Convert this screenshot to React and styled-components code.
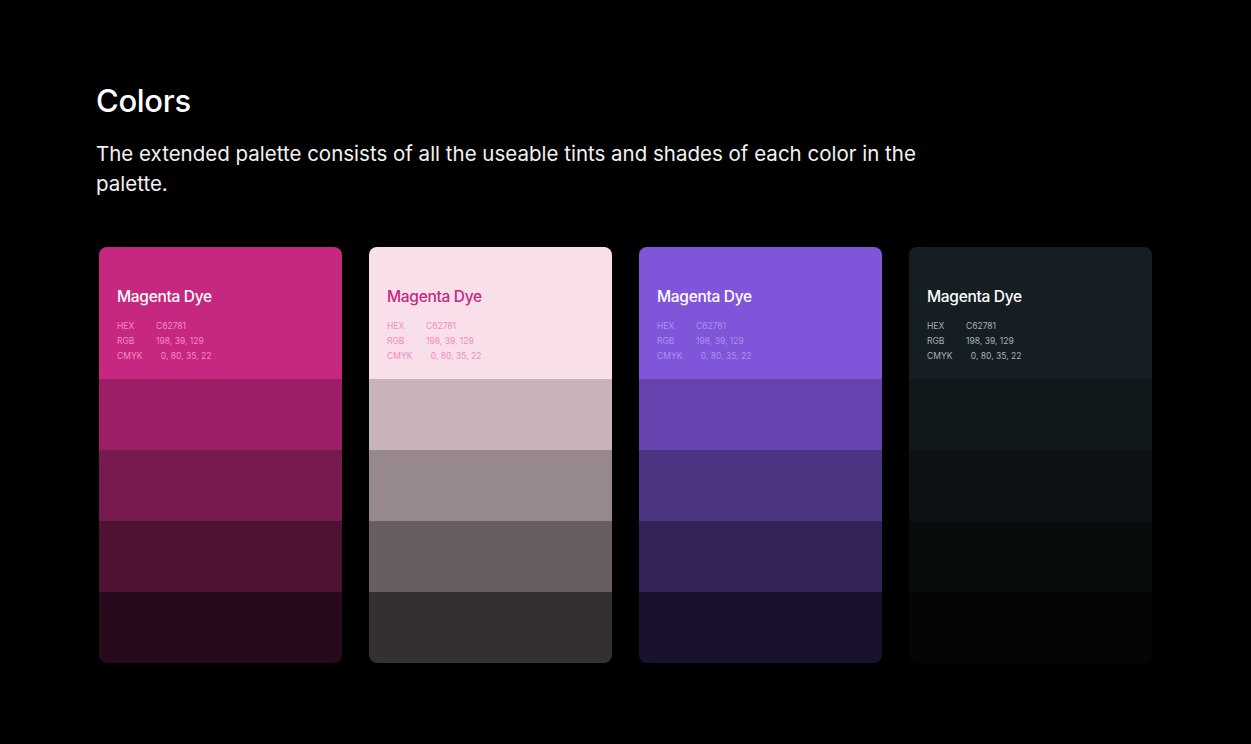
import React from 'react';
import styled, { createGlobalStyle } from 'styled-components';

const Global = createGlobalStyle`
  html, body { margin: 0; background: #000; }
  body { font-family: Inter, "Open Sans", sans-serif; }
`;

const Page = styled.div`
  width: 1251px;
  height: 744px;
  background: #000;
  padding: 82px 0 0 96px;
  box-sizing: border-box;
`;

const Title = styled.h1`
  margin: 0;
  color: #fff;
  font-size: 31px;
  font-weight: 500;
  letter-spacing: -0.3px;
`;

const Lead = styled.p`
  margin: 20px 0 0;
  width: 820px;
  color: #f2f2f2;
  font-size: 20.5px;
  line-height: 30px;
  font-weight: 400;
`;

const Cards = styled.div`
  display: flex;
  gap: 27px;
  margin: 48px 0 0 3px;
`;

const Card = styled.div`
  width: 243px;
  border-radius: 8px;
  overflow: hidden;
  display: flex;
  flex-direction: column;
`;

const Head = styled.div`
  height: 132px;
  background: ${p => p.$bg};
  padding: 40px 18px 0;
  box-sizing: border-box;
`;

const Name = styled.div`
  color: ${p => p.$fg};
  font-size: 15.5px;
  font-weight: 500;
  letter-spacing: -0.3px;
  margin-bottom: 13px;
`;

const Row = styled.div`
  display: flex;
  font-size: 8.5px;
  line-height: 15px;
  color: ${p => p.$fg};
`;

const Key = styled.span`
  width: 39px;
`;

const Shade = styled.div`
  height: 71px;
  background: ${p => p.$bg};
`;

const palettes = [
  { bg: '#c62781', name: '#fff', meta: 'rgba(255,160,210,0.85)', shades: ['#9c1f66', '#771a4f', '#4d1234', '#270a1b'] },
  { bg: '#f9dfea', name: '#c62781', meta: '#f08cbf', shades: ['#c8b3bd', '#978890', '#675d62', '#343032'] },
  { bg: '#7f56d9', name: '#fff', meta: 'rgba(180,150,245,0.9)', shades: ['#6643ae', '#4c3483', '#332357', '#1a122c'] },
  { bg: '#151f23', name: '#fff', meta: '#a9b0b3', shades: ['#10181b', '#0c1214', '#080c0d', '#040606'] },
];

const App = () => (
  <Page>
    <Global />
    <Title>Colors</Title>
    <Lead>The extended palette consists of all the useable tints and shades of each color in the palette.</Lead>
    <Cards>
      {palettes.map((p, i) => (
        <Card key={i}>
          <Head $bg={p.bg}>
            <Name $fg={p.name}>Magenta Dye</Name>
            <Row $fg={p.meta}><Key>HEX</Key>C62781</Row>
            <Row $fg={p.meta}><Key>RGB</Key>198, 39, 129</Row>
            <Row $fg={p.meta}><Key>CMYK</Key>&nbsp;&nbsp;0, 80, 35, 22</Row>
          </Head>
          {p.shades.map(s => <Shade key={s} $bg={s} />)}
        </Card>
      ))}
    </Cards>
  </Page>
);

export default App;
